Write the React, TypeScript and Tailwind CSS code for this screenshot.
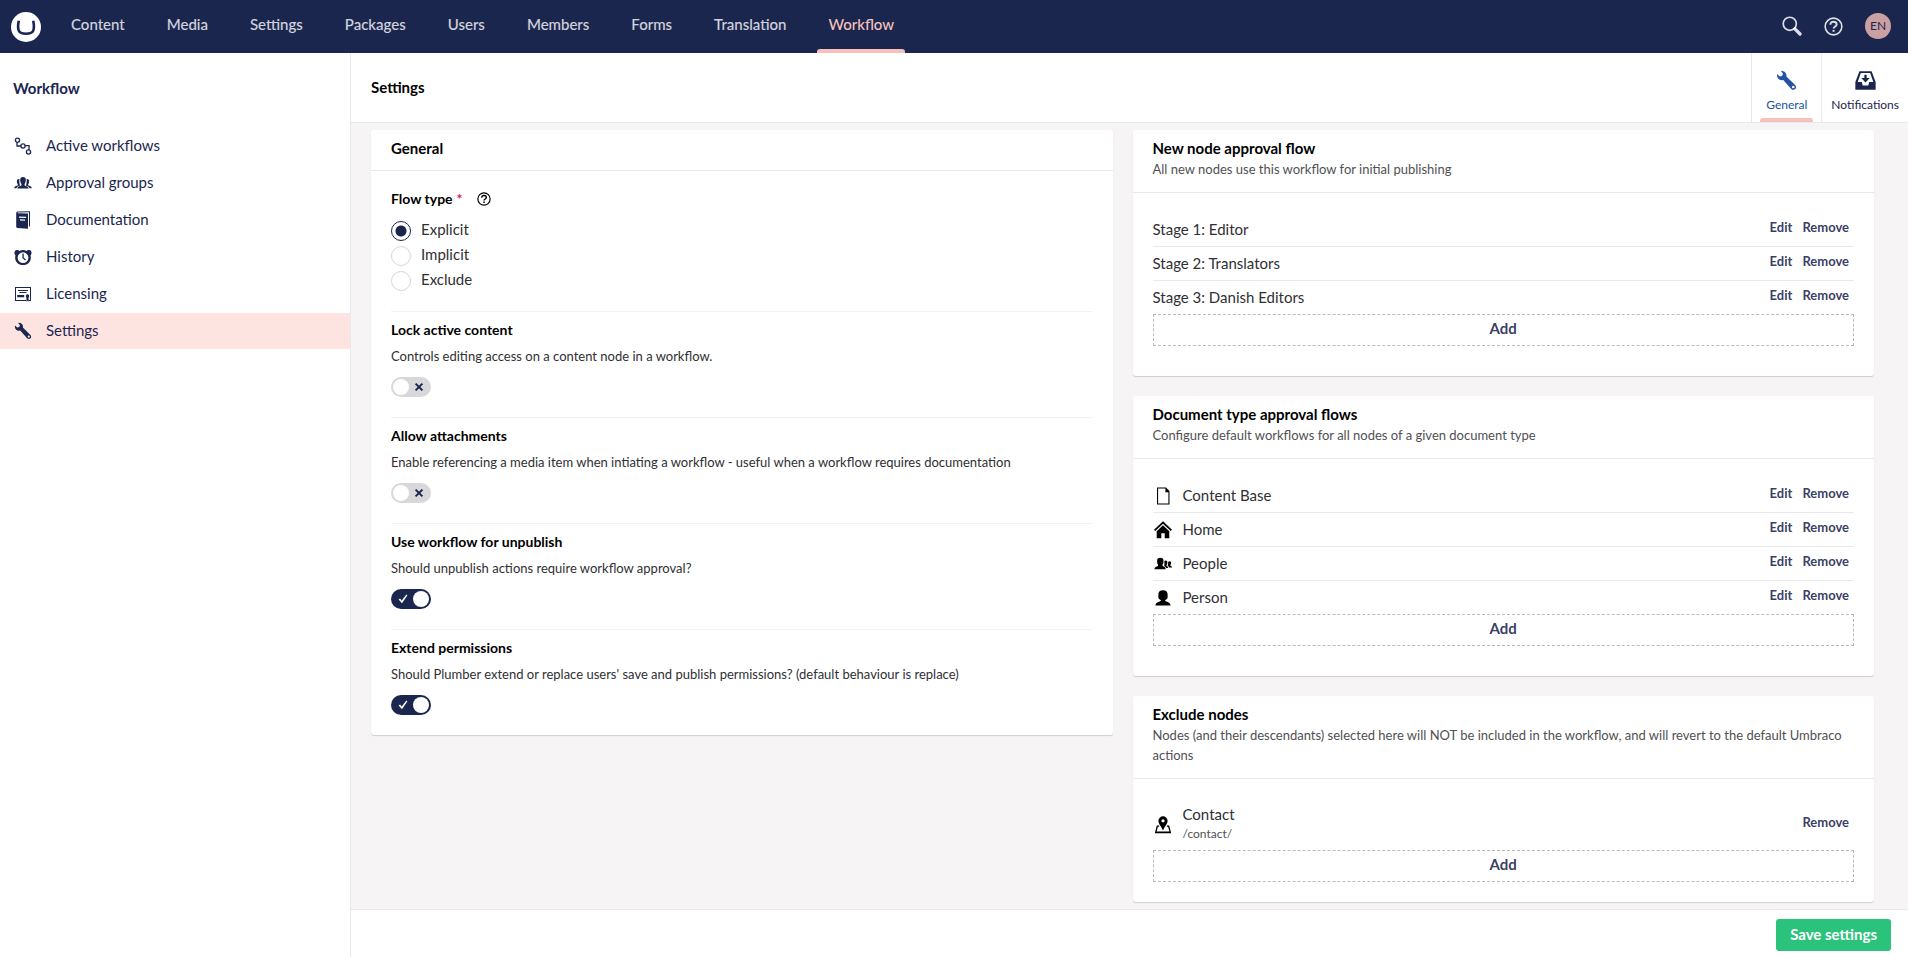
import React, { useState } from "react";
import type { ReactNode } from "react";

type IconProps = { className?: string };

const Svg = ({ className = "", children }: { className?: string; children: ReactNode }) => (
  <svg viewBox="0 0 18 18" fill="currentColor" aria-hidden="true" className={`shrink-0 ${className}`}>
    {children}
  </svg>
);

const PathIcon = ({ className }: IconProps) => (
  <Svg className={className}>
    <g fill="none" stroke="currentColor" strokeWidth="1.300">
      <circle cx="3.500" cy="3.300" r="2.100" />
      <circle cx="9" cy="9" r="2.100" />
      <circle cx="14.500" cy="15" r="2.100" />
      <path d="M3 5.300v3.700h4M11 8.600h4v4.300" />
    </g>
  </Svg>
);

const UsersIcon = ({ className }: IconProps) => (
  <Svg className={className}>
    <path d="M9 3c1.900 0 2.900 1.200 2.800 3-.1 2-.5 3.300-1.200 4v1.500c1.700.600 3.900 1.100 4.100 3.100H3.300c.2-2 2.400-2.500 4.100-3.100V10C6.700 9.300 6.300 8 6.200 6 6.100 4.200 7.100 3 9 3z" />
    <path d="M5.400 5c-1.700-.2-2.700.800-2.500 2.500.1 1.500.4 2.200.9 2.700v1.200C2.200 11.900.2 12.200.1 14.300h2.300c.500-1.800 1.900-2.300 3.700-2.900C5.300 9.700 5.200 7.200 5.400 5zM12.600 5c1.700-.2 2.700.8 2.500 2.500-.1 1.500-.4 2.200-.9 2.700v1.200c1.600.5 3.600.8 3.700 2.900h-2.300c-.5-1.800-1.900-2.300-3.700-2.900.8-1.700.9-4.200.7-6.400z" />
  </Svg>
);

const BookIcon = ({ className }: IconProps) => (
  <Svg className={className}>
    <path
      fillRule="evenodd"
      d="M2.200 2.200C2.200 1 3 .7 4 .600L16 .2v15.300l-1 .1V1.300L4 1.600c-.5 0-.7.5 0 .6l10 .2v15.400L3.600 16.900c-1-.1-1.400-.5-1.400-1.400zM5 5.600v1.200l7 .2V5.800zM6 8.300v1.200l5 .2V8.500z"
    />
  </Svg>
);

const AlarmIcon = ({ className }: IconProps) => (
  <Svg className={className}>
    <path
      fillRule="evenodd"
      d="M9 2.100c1.400 0 2.500.3 3.500.8 1-1.200 3.500-1.300 4.500.2.900 1.400.7 3.300-.5 4.300.9 3-.1 6.200-2.400 8-3 2.300-7.200 2.300-10.200 0-2.300-1.800-3.300-5-2.400-8C.3 6.400.1 4.500 1 3.100c1-1.500 3.500-1.400 4.500-.2 1-.5 2.100-.8 3.500-.8zm0 2.200a5.400 5.400 0 1 0 0 10.800A5.400 5.400 0 0 0 9 4.300z"
    />
    <path d="M8.400 5.500h1.300v3.900l2.200 2.100-.9.900-2.600-2.500z" />
  </Svg>
);

const CertificateIcon = ({ className }: IconProps) => (
  <Svg className={className}>
    <path fillRule="evenodd" d="M1 2h16v14h-2.600v-1.100H16V3.100H2v11.800h10V16H1z" />
    <path d="M4 5h10v1.100H4zM5.500 7.100h7v1H5.500zM3.200 10h7v2.300h-7z" />
    <circle cx="13.500" cy="11" r="1.700" />
    <path d="M12.400 12h2.200v4.800l-1.100-1-1.100 1z" />
  </Svg>
);

const WrenchIcon = ({ className }: IconProps) => (
  <Svg className={className}>
    <path
      fillRule="evenodd"
      d="M4.200.9c1.900-.4 4 .7 4.600 2.700.2.800.2 1.400.1 2l7.500 7.300c1 1 1 2.500.1 3.400s-2.400.9-3.400-.1L6.200 8.600c-2 .5-4-.4-4.900-2.200C.9 5.500.7 4.500.9 3.500l2.300 2 2-.4.800-1.900zM14.800 13.500a1.100 1.100 0 1 0 0 2.200 1.100 1.100 0 0 0 0-2.200z"
    />
  </Svg>
);

const InboxIcon = ({ className }: IconProps) => (
  <Svg className={className}>
    <path
      fillRule="evenodd"
      d="M3.800 1h10.400l3.500 9.300V17H.3v-6.700zM5 2.500 2.300 10.200h3.500l.8 3h4.800l.8-3h3.500L13 2.500z"
    />
    <path d="M8 4h2v2.800h2.600L9 10.700 5.400 6.800H8z" />
  </Svg>
);

const HelpIcon = ({ className }: IconProps) => (
  <Svg className={className}>
    <circle cx="9" cy="9" r="7.900" fill="none" stroke="currentColor" strokeWidth="1.500" />
    <path
      d="M6.100 7.300C6 5.500 7.200 4.500 9 4.500s3 1 3 2.500c0 2-2.900 2-2.900 4"
      fill="none"
      stroke="currentColor"
      strokeWidth="1.800"
    />
    <path d="M8.100 12.200H10V14H8.100z" />
  </Svg>
);

const SearchIcon = ({ className }: IconProps) => (
  <Svg className={className}>
    <circle cx="7" cy="7" r="5.900" fill="none" stroke="currentColor" strokeWidth="1.500" />
    <path d="m11.600 11.600 4.600 4.600" stroke="currentColor" strokeWidth="3" strokeLinecap="round" />
  </Svg>
);

const DocumentIcon = ({ className }: IconProps) => (
  <Svg className={className}>
    <path fillRule="evenodd" d="M3 .500h9L15.500 4v13.500H3zM4.100 1.600v14.800h10.300V5.200h-3V1.600z" />
  </Svg>
);

const HomeIcon = ({ className }: IconProps) => (
  <Svg className={className}>
    <path d="M9 .2 18 8.800l-1.200 1.300L9 2.700 1.200 10.100 0 8.800z" />
    <path d="m9 4.300 6.300 6v7h-4.600v-5H7.300v5H2.700v-7z" />
  </Svg>
);

const PeopleIcon = ({ className }: IconProps) => (
  <Svg className={className}>
    <path d="M6.300 2.800c2.200 0 3.300 1.200 3.200 3.200-.1 1.600.1 2.400-.9 3.600v1.400c1.700.6 3 1.200 3.100 3.300H.4c.1-2.100 1.900-2.700 3.600-3.300V9.600C3 8.400 3.200 7.600 3.100 6c-.1-2 1-3.200 3.200-3.200z" />
    <path d="M11.600 5.600c1.300 0 1.900.7 1.800 2-.1 1.200-.3 1.900-.8 2.300v1c.9.400 1.500.9 1.600 2.100h-2c-.4-1-1.100-1.700-2-2.100.4-1.300.2-3.500.1-4.800.3-.3.8-.5 1.300-.5z" />
    <path d="M15.600 6.200c1.100 0 1.600.7 1.500 1.800-.1 1-.3 1.500-.7 1.900v.9c.9.300 1.500.7 1.600 1.700h-3c-.2-.9-.7-1.500-1.400-1.900.6-1.100.6-2.400.5-3.700.3-.4.8-.7 1.500-.7z" />
  </Svg>
);

const PersonIcon = ({ className }: IconProps) => (
  <Svg className={className}>
    <path d="M9 1.200c3 0 4.700 1.500 4.600 4.200 0 2 .3 3.400-.5 4.400-.5.600-1.400 1-1.900 1.200v1c2.300.9 5.200 1.300 5.300 4.500h-15c.1-3.200 3-3.600 5.300-4.500v-1c-.5-.2-1.400-.6-1.900-1.200-.8-1-.5-2.400-.5-4.400C4.300 2.700 6 1.200 9 1.200z" />
  </Svg>
);

const MapIcon = ({ className }: IconProps) => (
  <Svg className={className}>
    <path
      fillRule="evenodd"
      d="M9 .300a4.600 4.600 0 0 1 4.600 4.600C13.600 7.600 10.800 10 9 14.500 7.200 10 4.400 7.600 4.400 4.900A4.600 4.600 0 0 1 9 .3zm0 2.900a1.600 1.600 0 1 0 0 3.200 1.600 1.600 0 0 0 0-3.200z"
    />
    <path d="M2.800 9.500h2.400v1.200H3.900L2.600 15.600h12.800l-1.300-4.900h-1.300V9.500h2.400l2 7.800H.8z" />
  </Svg>
);

const Logo = () => (
  <svg viewBox="0 0 30 30" role="img" aria-label="Umbraco" className="size-[30px] shrink-0">
    <circle cx="15" cy="15" r="15" fill="#fff" />
    <path
      d="M7.800 8.800c-1 4.500-.9 8 .1 10.200.9 1.900 3.300 2.700 7.100 2.700s6.200-.8 7.100-2.700c1-2.200 1.100-5.700.1-10.200"
      fill="none"
      stroke="#1b264f"
      strokeWidth="2.600"
    />
  </svg>
);

const navItems = ["Content", "Media", "Settings", "Packages", "Users", "Members", "Forms", "Translation", "Workflow"];

const TopBar = () => (
  <header className="flex h-[53px] shrink-0 items-center bg-[#1b264f] pl-[11px] pr-[17px]">
    <a href="#home">
      <Logo />
    </a>
    <nav className="ml-[9px] flex h-full">
      {navItems.map((item) => {
        const active = item === "Workflow";
        return (
          <a
            key={item}
            href={`#${item.toLowerCase()}`}
            className={`relative flex items-center px-[21px] pb-[6px] font-medium ${active ? "text-[#f5c1bc]" : "text-white/80"}`}
          >
            {item}
            {active && <span className="absolute inset-x-[10px] bottom-0 h-1 rounded-t-[3px] bg-[#f5c1bc]" />}
          </a>
        );
      })}
    </nav>
    <div className="ml-auto flex items-center pb-px text-white/85">
      <button type="button" aria-label="Search" className="mr-[22px]">
        <SearchIcon className="size-[20px]" />
      </button>
      <button type="button" aria-label="Help" className="mr-[22px]">
        <HelpIcon className="size-[19px]" />
      </button>
      <button
        type="button"
        aria-label="User profile"
        className="flex size-[26px] items-center justify-center rounded-full bg-[#cba0a3] text-xs text-[#1b264f]"
      >
        EN
      </button>
    </div>
  </header>
);

const sideItems = [
  { label: "Active workflows", Icon: PathIcon },
  { label: "Approval groups", Icon: UsersIcon },
  { label: "Documentation", Icon: BookIcon },
  { label: "History", Icon: AlarmIcon },
  { label: "Licensing", Icon: CertificateIcon },
  { label: "Settings", Icon: WrenchIcon },
];

const Sidebar = () => (
  <aside className="w-[351px] shrink-0 border-r border-[#e9e9eb] bg-white text-[#1b264f]">
    <h2 className="px-[13px] pt-[25px] font-bold leading-5">Workflow</h2>
    <nav className="mt-[30px] flex flex-col gap-px">
      {sideItems.map(({ label, Icon }) => (
        <a
          key={label}
          href={`#${label.toLowerCase().replace(" ", "-")}`}
          className={`flex h-9 items-center gap-[14px] pl-[14px] ${label === "Settings" ? "bg-[#fee4e1]" : ""}`}
        >
          <Icon className="size-[18px]" />
          <span className="pb-[2px]">{label}</span>
        </a>
      ))}
    </nav>
  </aside>
);

const Card = ({ title, subtitle, children }: { title: string; subtitle?: string; children: ReactNode }) => (
  <section className="rounded-[3px] bg-white shadow-[0_1px_1px_0_rgba(0,0,0,0.16)]">
    <div className={`border-b border-[#e9e9eb] px-5 pt-2 ${subtitle ? "pb-[13px]" : "pb-[11px]"}`}>
      <h3 className="font-bold leading-[21px] text-black">{title}</h3>
      {subtitle && <p className="text-[13px] leading-5 text-[#515054]">{subtitle}</p>}
    </div>
    {children}
  </section>
);

const Toggle = ({ id, initial }: { id: string; initial: boolean }) => {
  const [on, setOn] = useState(initial);
  return (
    <span className="relative mt-[11px] block h-5 w-10">
      <input
        id={id}
        type="checkbox"
        checked={on}
        onChange={() => setOn(!on)}
        className="block h-5 w-10 cursor-pointer appearance-none rounded-full bg-[#d8d7d9] checked:bg-[#1b264f]"
      />
      <span
        className={`pointer-events-none absolute top-[2px] size-4 rounded-full bg-white ${on ? "right-[2px]" : "left-[2px]"}`}
      />
      {on ? (
        <svg viewBox="0 0 10 10" className="pointer-events-none absolute left-[7px] top-[5px] size-[10px]" aria-hidden="true">
          <path d="M.6 5.600 2 4.600l1.700 1.900L8.400.6l1 .6L4 9.200z" fill="#fff" />
        </svg>
      ) : (
        <svg viewBox="0 0 10 10" className="pointer-events-none absolute right-[7px] top-[5px] size-[10px]" aria-hidden="true">
          <path d="m1.600 1.600 6.800 6.800M8.400 1.600 1.600 8.400" stroke="#1b264f" strokeWidth="2" />
        </svg>
      )}
    </span>
  );
};

const options = [
  {
    id: "lock",
    title: "Lock active content",
    text: "Controls editing access on a content node in a workflow.",
    on: false,
  },
  {
    id: "attachments",
    title: "Allow attachments",
    text: "Enable referencing a media item when intiating a workflow - useful when a workflow requires documentation",
    on: false,
  },
  {
    id: "unpublish",
    title: "Use workflow for unpublish",
    text: "Should unpublish actions require workflow approval?",
    on: true,
  },
  {
    id: "permissions",
    title: "Extend permissions",
    text: "Should Plumber extend or replace users' save and publish permissions? (default behaviour is replace)",
    on: true,
  },
];

const GeneralCard = () => {
  const [flow, setFlow] = useState("Explicit");
  return (
    <Card title="General">
      <div className="px-5 pt-[18px]">
        <fieldset className="pb-5">
          <legend className="flex h-5 items-center text-sm font-bold text-black">
            Flow type <span className="ml-1 text-[#d42054]">*</span>
            <button type="button" aria-label="About flow types" className="ml-[14px]">
              <HelpIcon className="size-[14px]" />
            </button>
          </legend>
          <div className="mt-3 flex flex-col gap-[5px]">
            {["Explicit", "Implicit", "Exclude"].map((name) => (
              <label key={name} className="flex h-5 items-center gap-[10px]">
                <input
                  type="radio"
                  name="flow"
                  value={name}
                  checked={flow === name}
                  onChange={() => setFlow(name)}
                  className="size-5 appearance-none rounded-full border border-[#d8d7d9] checked:border-[#1b264f] checked:bg-[radial-gradient(circle,#1b264f_5px,white_6px)]"
                />
                <span className="pb-1">{name}</span>
              </label>
            ))}
          </div>
        </fieldset>
        {options.map((option) => (
          <div key={option.id} className="border-t border-[#f3f3f5] pb-5 pt-2">
            <label htmlFor={option.id} className="block text-sm font-bold leading-5 text-black">
              {option.title}
            </label>
            <p className="mt-[6px] text-[13px] leading-5">{option.text}</p>
            <Toggle id={option.id} initial={option.on} />
          </div>
        ))}
      </div>
    </Card>
  );
};

type Row = { label: string; path?: string; Icon?: (props: IconProps) => ReactNode; canEdit?: boolean };

const RowList = ({ rows }: { rows: Row[] }) => (
  <>
    <ul>
      {rows.map(({ label, path, Icon, canEdit = true }) => (
        <li
          key={label}
          className={`flex items-center justify-between border-b border-[#e9e9eb] last:border-b-0 ${path ? "h-[51px]" : "h-[34px] last:h-[33px]"}`}
        >
          <div className="flex items-center">
            {Icon && <Icon className="ml-[1px] mr-[11px] size-[18px] text-black" />}
            <div className="pb-[2px]">
              <div className="leading-5">{label}</div>
              {path && <div className="text-xs leading-5 text-[#515054]">{path}</div>}
            </div>
          </div>
          <div className="flex gap-[10px] pb-[6px] pr-[5px] text-[13px] font-bold text-[#1b264f]/90">
            {canEdit && <button type="button">Edit</button>}
            <button type="button">Remove</button>
          </div>
        </li>
      ))}
    </ul>
    <button
      type="button"
      className="flex h-8 w-full items-center justify-center border border-dashed border-[#bbbabf] pb-1 font-bold text-[#1b264f]/90"
    >
      Add
    </button>
  </>
);

export default function App() {
  return (
    <div className="flex h-screen flex-col font-['Lato',sans-serif] text-[15px] leading-5 text-[#303033]">
      <TopBar />
      <div className="flex min-h-0 flex-1">
        <Sidebar />
        <main className="flex min-w-0 flex-1 flex-col bg-[#f6f4f5]">
          <div className="flex h-[70px] shrink-0 border-b border-[#e9e9eb] bg-white">
            <h1 className="flex-1 pl-5 pt-6 font-bold text-black">Settings</h1>
            <a
              href="#general"
              className="relative flex w-[70px] flex-col items-center border-l border-[#e9e9eb] pt-[17px] text-xs text-[#2152a3]"
            >
              <WrenchIcon className="size-[21px]" />
              <span className="mt-1 leading-5">General</span>
              <span className="absolute inset-x-2 bottom-0 h-1 rounded-t-[3px] bg-[#f5c1bc]" />
            </a>
            <a
              href="#notifications"
              className="flex flex-col items-center border-l border-[#e9e9eb] px-[9px] pt-[17px] text-xs text-[#1b264f]"
            >
              <InboxIcon className="size-[21px]" />
              <span className="mt-1 leading-5">Notifications</span>
            </a>
          </div>
          <div className="min-h-0 flex-1 overflow-y-auto py-[7px] pl-5 pr-[34px]">
            <div className="grid grid-cols-2 items-start gap-5">
              <GeneralCard />
              <div className="flex flex-col gap-5">
                <Card title="New node approval flow" subtitle="All new nodes use this workflow for initial publishing">
                  <div className="px-5 pb-[30px] pt-5">
                    <RowList
                      rows={[
                        { label: "Stage 1: Editor" },
                        { label: "Stage 2: Translators" },
                        { label: "Stage 3: Danish Editors" },
                      ]}
                    />
                  </div>
                </Card>
                <Card
                  title="Document type approval flows"
                  subtitle="Configure default workflows for all nodes of a given document type"
                >
                  <div className="px-5 pb-[30px] pt-5">
                    <RowList
                      rows={[
                        { label: "Content Base", Icon: DocumentIcon },
                        { label: "Home", Icon: HomeIcon },
                        { label: "People", Icon: PeopleIcon },
                        { label: "Person", Icon: PersonIcon },
                      ]}
                    />
                  </div>
                </Card>
                <Card
                  title="Exclude nodes"
                  subtitle="Nodes (and their descendants) selected here will NOT be included in the workflow, and will revert to the default Umbraco actions"
                >
                  <div className="px-5 pb-5 pt-5">
                    <RowList rows={[{ label: "Contact", path: "/contact/", Icon: MapIcon, canEdit: false }]} />
                  </div>
                </Card>
              </div>
            </div>
          </div>
          <footer className="flex shrink-0 justify-end border-t border-[#e9e9eb] bg-white pb-[6px] pr-[17px] pt-[9px]">
            <button type="button" className="h-8 rounded-[3px] bg-[#2bc37c] px-[14px] pb-[3px] font-bold text-white">
              Save settings
            </button>
          </footer>
        </main>
      </div>
    </div>
  );
}
